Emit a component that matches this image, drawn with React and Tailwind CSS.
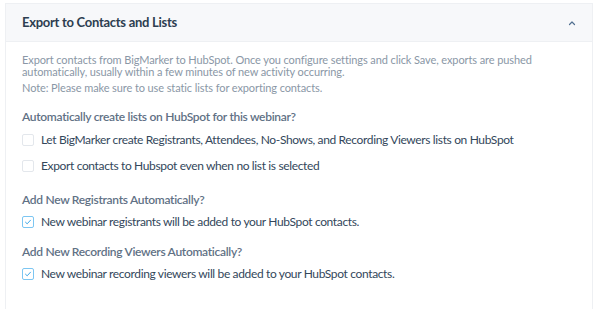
export default function App() {
  const font = { fontFamily: "Lato, 'Noto Sans', sans-serif" };
  const Check = ({ checked }) => (
    <span
      className={`flex h-3 w-3 shrink-0 items-center justify-center rounded-[2px] border ${
        checked ? "border-[#7cc6f2] bg-white" : "border-[#e3e7ec] bg-white"
      }`}
    >
      {checked && (
        <svg width="8" height="8" viewBox="0 0 8 8" fill="none">
          <path d="M1.5 4.2 L3.2 5.8 L6.5 2.2" stroke="#3ea8e8" strokeWidth="1" strokeLinecap="round" strokeLinejoin="round" />
        </svg>
      )}
    </span>
  );
  const Item = ({ checked, children }) => (
    <div className="flex items-center gap-[7px]">
      <Check checked={checked} />
      <span className="text-[12px] leading-[16px] tracking-[-0.36px] text-[#33475b]">{children}</span>
    </div>
  );
  const Heading = ({ className, children }) => (
    <div className={`text-[12px] font-semibold leading-[16px] tracking-[-0.3px] text-[#5f7185] ${className}`}>{children}</div>
  );
  return (
    <div className="h-[309px] w-[600px] bg-white pl-[5px] pr-[7px] pt-[3px]" style={font}>
      <div className="h-full border border-b-0 border-[#eef0f3]">
        <div className="flex h-[38px] items-center justify-between border-b border-[#eef0f3] bg-[#f7f8fa] pl-[16px] pr-[16px]">
          <span className="text-[13px] font-bold tracking-[-0.28px] text-[#2d3e50]">Export to Contacts and Lists</span>
          <svg width="8" height="6" viewBox="0 0 8 6" fill="none">
            <path d="M1.5 4.5 L4 2 L6.5 4.5" stroke="#516f90" strokeWidth="1.2" strokeLinecap="round" strokeLinejoin="round" />
          </svg>
        </div>
        <div className="px-[16px] pt-[12px]">
          <p className="max-w-[530px] text-[11px] leading-[12px] tracking-[-0.1px] text-[#8a97a6]">
            Export contacts from BigMarker to HubSpot. Once you configure settings and click Save, exports are pushed automatically, usually within a few minutes of new activity occurring.
          </p>
          <p className="mt-[4px] text-[11px] leading-[12px] tracking-[-0.1px] text-[#8a97a6]">
            Note: Please make sure to use static lists for exporting contacts.
          </p>
          <Heading className="mt-[15px]">Automatically create lists on HubSpot for this webinar?</Heading>
          <div className="mt-[7px] flex flex-col gap-[10px]">
            <Item>Let BigMarker create Registrants, Attendees, No-Shows, and Recording Viewers lists on HubSpot</Item>
            <Item>Export contacts to Hubspot even when no list is selected</Item>
          </div>
          <Heading className="mt-[18px]">Add New Registrants Automatically?</Heading>
          <div className="mt-[6px]">
            <Item checked>New webinar registrants will be added to your HubSpot contacts.</Item>
          </div>
          <Heading className="mt-[14px]">Add New Recording Viewers Automatically?</Heading>
          <div className="mt-[6px]">
            <Item checked>New webinar recording viewers will be added to your HubSpot contacts.</Item>
          </div>
        </div>
      </div>
    </div>
  );
}
